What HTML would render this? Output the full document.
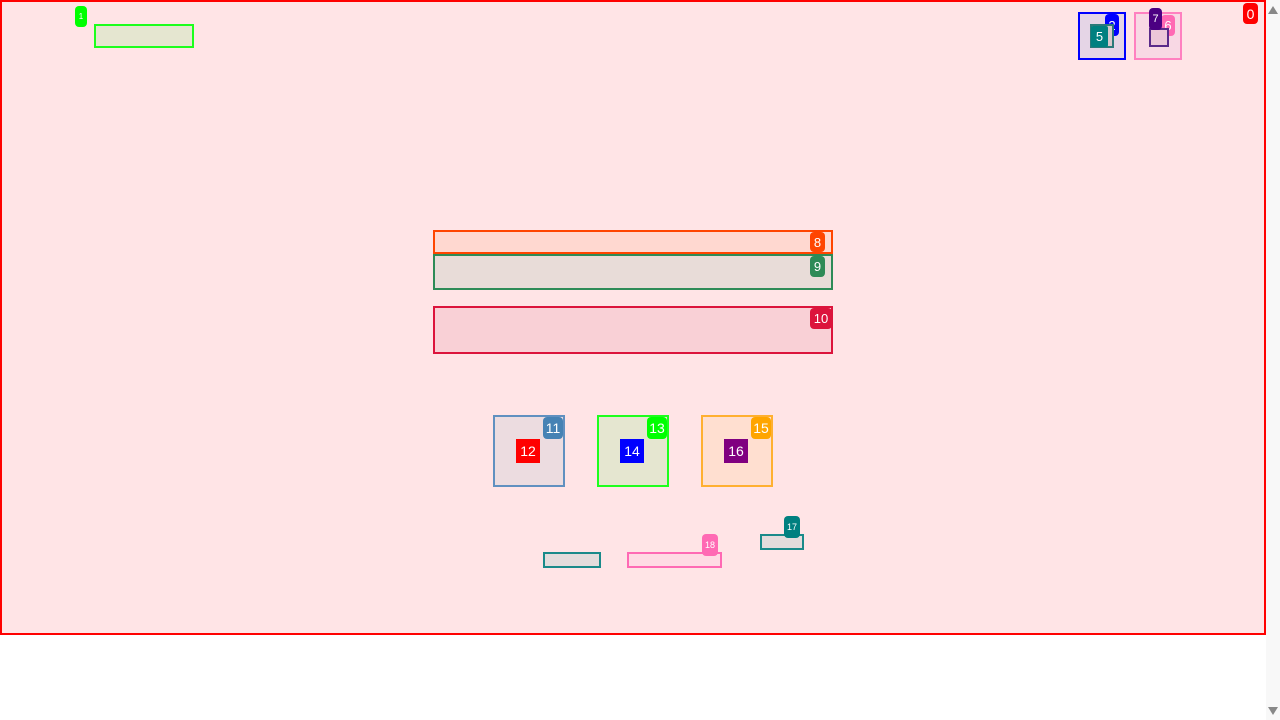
<!DOCTYPE html>
<html><head><meta charset="utf-8"><style>
html,body{margin:0;padding:0;width:1280px;height:720px;background:#fff;overflow:hidden;font-family:"Liberation Sans","DejaVu Sans",sans-serif}
.b{position:absolute;box-sizing:border-box;border:2px solid}
.l{position:absolute;color:#fff;font-size:13px;line-height:1;display:flex;align-items:center;justify-content:center;border-radius:4px}
</style></head><body>
<div class="b" style="left:0;top:0;width:1266px;height:635px;border-color:#f00;background:#ffe4e6"></div>
<div class="l" style="left:1243px;top:3px;width:15px;height:21px;background:#f00;font-size:14px">0</div>

<div class="b" style="left:94px;top:24px;width:100px;height:24px;border-color:#1dff1d;background:#e5e6d0"></div>
<div class="l" style="left:75px;top:6px;width:12px;height:21px;background:#0f0;font-size:8px">1</div>

<div class="b" style="left:1078px;top:12px;width:48px;height:48px;border-color:#00f;background:#e5d5e6"></div>
<div class="l" style="left:1105px;top:14px;width:14px;height:22px;background:#00f">2</div>
<div class="b" style="left:1090px;top:24px;width:24px;height:24px;border-color:#2a7a7a;background:#d9c8cc"></div>
<div class="l" style="left:1091px;top:26px;width:17px;height:21px;background:#008080;border-radius:2px">5</div>

<div class="b" style="left:1134px;top:12px;width:48px;height:48px;border-color:#ff80c0;background:#f8d8e4"></div>
<div class="l" style="left:1161px;top:15px;width:14px;height:21px;background:#ff69b4">6</div>
<div class="b" style="left:1149px;top:28px;width:20px;height:19px;border-color:#5a2a8a;background:#ecc6d8"></div>
<div class="l" style="left:1149px;top:8px;width:13px;height:22px;background:#4b0082;font-size:11px">7</div>

<div class="b" style="left:433px;top:230px;width:400px;height:24px;border-color:#ff4500;background:#ffd8d0"></div>
<div class="l" style="left:810px;top:232px;width:15px;height:20px;background:#ff4500">8</div>
<div class="b" style="left:433px;top:254px;width:400px;height:36px;border-color:#2e8b57;background:#e8dcd8"></div>
<div class="l" style="left:810px;top:256px;width:15px;height:21px;background:#2e8b57">9</div>
<div class="b" style="left:433px;top:306px;width:400px;height:48px;border-color:#dc143c;background:#f9d0d6"></div>
<div class="l" style="left:810px;top:308px;width:22px;height:21px;background:#dc143c">10</div>

<div class="b" style="left:493px;top:415px;width:72px;height:72px;border-color:#6090c0;background:#ecdce0"></div>
<div class="l" style="left:543px;top:417px;width:20px;height:22px;background:#4682b4;font-size:14px">11</div>
<div class="l" style="left:516px;top:439px;width:24px;height:24px;background:#f00;border-radius:0;font-size:14px">12</div>

<div class="b" style="left:597px;top:415px;width:72px;height:72px;border-color:#1dff1d;background:#e5e6d0"></div>
<div class="l" style="left:647px;top:417px;width:20px;height:22px;background:#0f0;font-size:14px">13</div>
<div class="l" style="left:620px;top:439px;width:24px;height:24px;background:#00f;border-radius:0;font-size:14px">14</div>

<div class="b" style="left:701px;top:415px;width:72px;height:72px;border-color:#ffb030;background:#ffdfd0"></div>
<div class="l" style="left:751px;top:417px;width:20px;height:22px;background:#ffa500;font-size:14px">15</div>
<div class="l" style="left:724px;top:439px;width:24px;height:24px;background:#800080;border-radius:0;font-size:14px">16</div>

<div class="b" style="left:760px;top:534px;width:44px;height:16px;border-color:#1a8a8a;background:#e4dcdc"></div>
<div class="l" style="left:784px;top:516px;width:16px;height:22px;background:#008080;font-size:9px">17</div>
<div class="b" style="left:627px;top:552px;width:95px;height:16px;border-color:#ff69b4;background:#ffdae4"></div>
<div class="l" style="left:702px;top:534px;width:16px;height:22px;background:#ff69b4;font-size:9px">18</div>
<div class="b" style="left:543px;top:552px;width:58px;height:16px;border-color:#1a8a8a;background:#e4dcdc"></div>

<div style="position:absolute;left:1266px;top:0;width:14px;height:720px;background:#f8f8f8"></div>
<div style="position:absolute;left:1268px;top:6px;width:0;height:0;border-left:5px solid transparent;border-right:5px solid transparent;border-bottom:8px solid #888"></div>
<div style="position:absolute;left:1268px;top:707px;width:0;height:0;border-left:5px solid transparent;border-right:5px solid transparent;border-top:8px solid #888"></div>
</body></html>
